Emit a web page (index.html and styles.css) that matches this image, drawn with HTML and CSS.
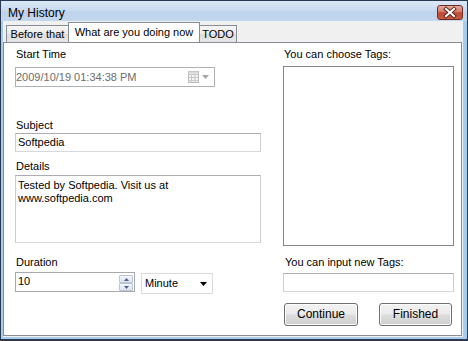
FILE: index.html
```html
<!DOCTYPE html>
<html>
<head>
<meta charset="utf-8">
<link rel="stylesheet" href="styles.css">
</head>
<body>
<div class="window">
  <div class="titlebar">
    <span class="title">My History</span>
    <div class="close">
      <svg width="24" height="13" viewBox="0 0 24 13">
        <path d="M8 3 L16 10 M16 3 L8 10" stroke="#5c2a22" stroke-width="4" stroke-linecap="square" fill="none"/>
        <path d="M8 3 L16 10 M16 3 L8 10" stroke="#ffffff" stroke-width="2" stroke-linecap="square" fill="none"/>
      </svg>
    </div>
  </div>
  <div class="client">
    <div class="tabs">
      <div class="tab tab-before">Before that</div>
      <div class="tab tab-active">What are you doing now</div>
      <div class="tab tab-todo">TODO</div>
    </div>
    <div class="panel">
      <div class="col col-left">
        <div class="lbl">Start Time</div>
        <div class="date">
          <span class="date-text">2009/10/19 01:34:38 PM</span>
          <svg class="cal" width="11" height="12" viewBox="0 0 11 12">
            <rect x="0.5" y="0.5" width="10" height="11" fill="#f4f4f4" stroke="#b8b8b8"/>
            <path d="M0.5 3.5 H10.5 M0.5 6.5 H10.5 M0.5 9.5 H10.5 M3.5 3.5 V11.5 M7 3.5 V11.5" stroke="#c8c8c8" fill="none"/>
            <rect x="0.5" y="0.5" width="10" height="2" fill="#d8d8d8"/>
          </svg>
          <svg class="dd" width="7" height="4" viewBox="0 0 7 4"><path d="M0 0 H7 L3.5 4 Z" fill="#a6a6a6"/></svg>
        </div>
        <div class="lbl lbl-subject">Subject</div>
        <div class="field subject">Softpedia</div>
        <div class="lbl lbl-details">Details</div>
        <div class="field details">Tested by Softpedia. Visit us at<br>www.softpedia.com</div>
        <div class="lbl lbl-duration">Duration</div>
        <div class="duration-row">
          <div class="numeric">
            <span class="num-text">10</span>
            <div class="spin">
              <div class="spin-btn"><svg width="5" height="3" viewBox="0 0 5 3"><path d="M0 3 H5 L2.5 0 Z" fill="#4c5f86"/></svg></div>
              <div class="spin-btn"><svg width="5" height="3" viewBox="0 0 5 3"><path d="M0 0 H5 L2.5 3 Z" fill="#4c5f86"/></svg></div>
            </div>
          </div>
          <div class="combo">
            <span>Minute</span>
            <svg width="7" height="4" viewBox="0 0 7 4"><path d="M0 0 H7 L3.5 4 Z" fill="#000"/></svg>
          </div>
        </div>
      </div>
      <div class="col col-right">
        <div class="lbl">You can choose Tags:</div>
        <div class="listbox"></div>
        <div class="lbl lbl-newtags">You can input new Tags:</div>
        <div class="field newtag"></div>
        <div class="buttons">
          <div class="btn btn-continue">Continue</div>
          <div class="btn btn-finished">Finished</div>
        </div>
      </div>
    </div>
  </div>
</div>
</body>
</html>
```
FILE: styles.css
```css
* { box-sizing: border-box; }
body {
  margin: 0;
  font-family: "Liberation Sans", Arial, sans-serif;
  font-size: 11px;
  color: #000;
  background: #fff;
}
.window {
  width: 468px;
  height: 341px;
  display: flex;
  flex-direction: column;
  border: 1px solid #2a3852;
  border-bottom-width: 2px;
  background: #a7cdee;
}
.titlebar {
  height: 20px;
  flex: none;
  display: flex;
  align-items: flex-start;
  justify-content: space-between;
  padding: 0 4px 0 7px;
  background: linear-gradient(#dce8f6, #c9dbf0 45%, #bed3ec 55%, #c3d7ee);
}
.title {
  font-size: 12px;
  line-height: 14px;
  margin-top: 5px;
}
.close {
  width: 26px;
  height: 15px;
  margin-top: 4px;
  border: 1px solid #6e2b22;
  border-radius: 3px;
  background: linear-gradient(#e6aa9e, #d47a68 45%, #bf4a33 52%, #c95a40);
  display: flex;
  align-items: center;
  justify-content: center;
}
.client {
  flex: 1;
  display: flex;
  flex-direction: column;
  margin: 0 4px 2px 2px;
  padding: 0 1px 1px 0;
  background: #f0f0f0;
}
.tabs {
  height: 21px;
  flex: none;
  display: flex;
  align-items: flex-end;
  padding-left: 3px;
}
.tab {
  height: 17px;
  line-height: 13px;
  padding: 2px 0 0 0;
  text-align: center;
  border: 1px solid #898c95;
  border-bottom: none;
  background: linear-gradient(#f6f6f6, #ebebeb 50%, #dedede 51%, #e6e6e6);
}
.tab-before { width: 62px; border-right: none; }
.tab-active {
  width: 132px;
  height: 21px;
  margin-bottom: -1px;
  padding-top: 3px;
  background: #fff;
}
.tab-todo { width: 37px; border-left: none; }
.panel {
  flex: 1;
  display: flex;
  gap: 22px;
  padding: 5px 0 0 11px;
  border: 1px solid #898c95;
  background: #fff;
}
.col {
  display: flex;
  flex-direction: column;
}
.col-left { width: 246px; }
.col-right { width: 171px; }
.lbl {
  height: 13px;
  line-height: 13px;
  padding-left: 1px;
  white-space: nowrap;
}
.date {
  margin-top: 6px;
  width: 200px;
  height: 20px;
  border: 1px solid #adb2b5;
  display: flex;
  align-items: center;
  padding-left: 0;
  color: #6d6d6d;
}
.date-text { flex: 1; line-height: 13px; }
.cal { margin-right: 3px; }
.dd { margin-right: 5px; }
.lbl-subject { margin-top: 32px; }
.field {
  border: 1px solid;
  border-color: #abadb3 #c9ccd2 #d5d8dd #c9ccd2;
  background: #fff;
  line-height: 13px;
}
.subject {
  margin-top: 1px;
  height: 19px;
  padding: 2px 2px 0;
}
.lbl-details { margin-top: 8px; }
.details {
  margin-top: 2px;
  height: 68px;
  padding: 3px 2px 0;
}
.lbl-duration { margin-top: 13px; }
.duration-row {
  margin-top: 3px;
  display: flex;
  align-items: flex-start;
}
.numeric {
  width: 120px;
  height: 20px;
  border: 1px solid #a6a9ae;
  display: flex;
  align-items: flex-start;
  padding: 2px 1px 0 2px;
}
.num-text { flex: 1; line-height: 13px; }
.spin {
  width: 14px;
  display: flex;
  flex-direction: column;
  gap: 0;
}
.spin-btn {
  height: 8px;
  border: 1px solid #b9c4d4;
  border-radius: 1px;
  background: linear-gradient(#f4f7fb, #dbe4ef);
  display: flex;
  align-items: center;
  justify-content: center;
}
.combo {
  margin-left: 6px;
  margin-top: 1px;
  width: 72px;
  height: 21px;
  border: 1px solid #dadada;
  display: flex;
  align-items: center;
  justify-content: space-between;
  padding: 0 5px 0 3px;
  line-height: 13px;
}
.listbox {
  margin-top: 5px;
  height: 180px;
  border: 1px solid #828790;
  background: #fff;
}
.lbl-newtags { margin-top: 10px; padding-left: 2px; }
.newtag {
  margin-top: 4px;
  height: 19px;
}
.buttons {
  margin-top: 11px;
  display: flex;
  justify-content: space-between;
  padding: 0 2px 0 1px;
}
.btn {
  height: 23px;
  border: 1px solid #707070;
  border-radius: 3px;
  background: linear-gradient(#f2f2f2, #ebebeb 48%, #dddddd 52%, #cfcfcf);
  box-shadow: inset 0 0 0 1px #fcfcfc;
  display: flex;
  align-items: center;
  justify-content: center;
  line-height: 13px;
  font-size: 12px;
}
.btn-continue { width: 74px; }
.btn-finished { width: 73px; }
```
